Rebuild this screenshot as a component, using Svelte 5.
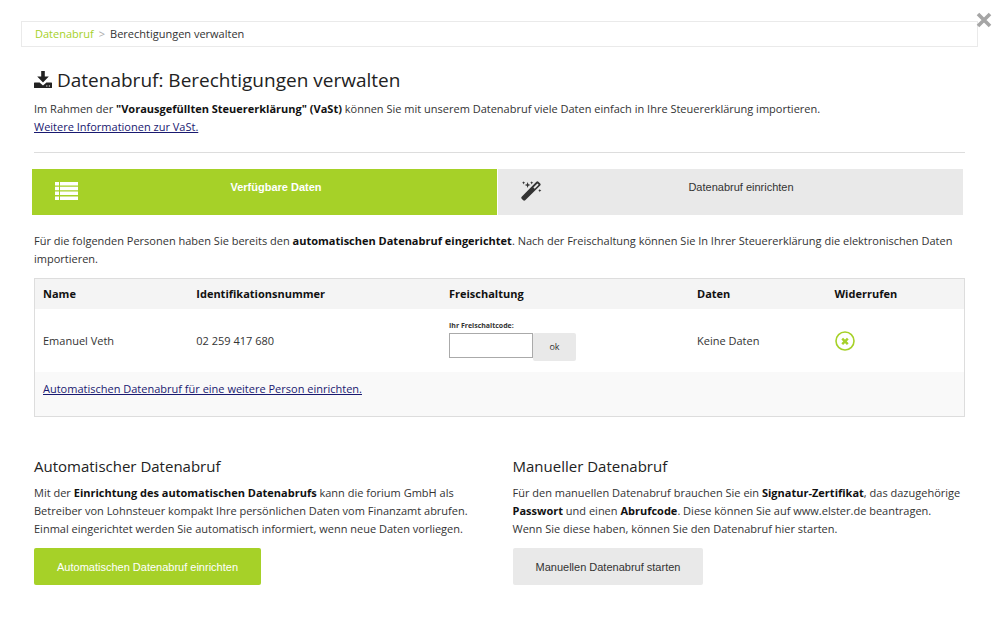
<script lang="ts">
  interface Person {
    name: string
    idNumber: string
    data: string
  }

  let persons: Person[] = $state([
    { name: "Emanuel Veth", idNumber: "02 259 417 680", data: "Keine Daten" },
  ])
</script>

<div class="page">
  <header>
    <nav>
      <a href="/datenabruf">Datenabruf</a>
      <span class="separator">&gt;</span>
      <span>Berechtigungen verwalten</span>
    </nav>
    <button class="close" aria-label="Schließen">
      <svg viewBox="0 0 16 16" width="16" height="16">
        <path d="M2 2 14 14M14 2 2 14" />
      </svg>
    </button>
  </header>

  <main>
    <h1>
      <svg viewBox="0 0 18 17" width="18" height="17">
        <path d="M7.2 0h3.6v5.5h4L9 11.6 3.2 5.5h4z" />
        <path d="M.6 11.4h5L9 14.6l3.4-3.2h5q.6 0 .6.6v4.4q0 .6-.6.6H.6q-.6 0-.6-.6V12q0-.6.6-.6zM12.2 14.4v1.2h1.2v-1.2zm2.6 0v1.2H16v-1.2z" fill-rule="evenodd" />
      </svg>
      Datenabruf: Berechtigungen verwalten
    </h1>
    <p>
      Im Rahmen der <b>"Vorausgefüllten Steuererklärung" (VaSt)</b> können Sie mit unserem Datenabruf viele Daten einfach in Ihre Steuererklärung importieren.<br />
      <a href="/vast">Weitere Informationen zur VaSt.</a>
    </p>
    <hr />

    <div class="tabs">
      <button class="active">
        <svg viewBox="0 0 23 18" width="23" height="18">
          <path d="M0 0h4v3.5H0zM5 0h18v3.5H5zM0 4.8h4v3.5H0zM5 4.8h18v3.5H5zM0 9.6h4v3.5H0zM5 9.6h18v3.5H5zM0 14.4h4V18H0zM5 14.4h18V18H5z" />
        </svg>
        <span>Verfügbare Daten</span>
      </button>
      <button>
        <svg viewBox="0 0 21 20" width="21" height="20">
          <path d="M15.4.8q1-.9 2 0l1.8 1.8q.9 1 0 2L4.2 19.3q-1 .9-2 0L.7 17.8q-.9-1 0-2zM16.4 2.4 12.4 6.4l1.3 1.3 4-4z" fill-rule="evenodd" />
          <path d="m6.6 1 .8 2.2 2.2.7-2.2.8-.8 2.2-.8-2.2-2.2-.8 2.2-.7zM2.6.2l.5 1.1 1.1.5-1.1.5-.5 1.1-.5-1.1L1 1.8l1.1-.5zM10.7.2l.5 1.1 1.1.5-1.1.5-.5 1.1-.5-1.1-1.1-.5 1.1-.5zM18.8 8l.5 1.1 1.1.5-1.1.5-.5 1.1-.5-1.1-1.1-.5 1.1-.5z" />
        </svg>
        <span>Datenabruf einrichten</span>
      </button>
    </div>

    <p>
      Für die folgenden Personen haben Sie bereits den <b>automatischen Datenabruf eingerichtet</b>. Nach der Freischaltung können Sie In Ihrer Steuererklärung die elektronischen Daten importieren.
    </p>

    <table>
      <thead>
        <tr>
          <th class="name">Name</th>
          <th class="number">Identifikationsnummer</th>
          <th class="unlock">Freischaltung</th>
          <th class="data">Daten</th>
          <th>Widerrufen</th>
        </tr>
      </thead>
      <tbody>
        {#each persons as person, i}
          <tr>
            <td>{person.name}</td>
            <td>{person.idNumber}</td>
            <td>
              <label for="code-{i}">Ihr Freischaltcode:</label>
              <div class="code">
                <input id="code-{i}" type="text" />
                <button>ok</button>
              </div>
            </td>
            <td>{person.data}</td>
            <td>
              <button class="revoke" aria-label="Widerrufen">
                <svg viewBox="0 0 20 20" width="20" height="20">
                  <circle cx="10" cy="10" r="9" />
                  <path d="m7.2 7.6 5.6 5.6M12.8 7.6l-5.6 5.6" />
                </svg>
              </button>
            </td>
          </tr>
        {/each}
      </tbody>
      <tfoot>
        <tr>
          <td colspan="5">
            <a href="/einrichten">Automatischen Datenabruf für eine weitere Person einrichten.</a>
          </td>
        </tr>
      </tfoot>
    </table>

    <div class="columns">
      <section>
        <h2>Automatischer Datenabruf</h2>
        <p>
          Mit der <b>Einrichtung des automatischen Datenabrufs</b> kann die forium GmbH als Betreiber von Lohnsteuer kompakt Ihre persönlichen Daten vom Finanzamt abrufen. Einmal eingerichtet werden Sie automatisch informiert, wenn neue Daten vorliegen.
        </p>
        <button class="action primary">Automatischen Datenabruf einrichten</button>
      </section>
      <section>
        <h2>Manueller Datenabruf</h2>
        <p>
          Für den manuellen Datenabruf brauchen Sie ein <b>Signatur-Zertifikat</b>, das dazugehörige <b>Passwort</b> und einen <b>Abrufcode</b>. Diese können Sie auf www.elster.de beantragen.<br />
          Wenn Sie diese haben, können Sie den Datenabruf hier starten.
        </p>
        <button class="action">Manuellen Datenabruf starten</button>
      </section>
    </div>
  </main>
</div>

<style>
  :global(body) {
    background: #fff;
  }
  .page {
    --green: #a6d128;
    --grey: #e9e9e9;

    padding: 21px 22px 21px 21px;
    font: 11px/18px "Open Sans", sans-serif;
    color: #333;
  }
  button {
    border: 0;
    padding: 0;
    background: none;
    color: inherit;
    font: 11px/18px "Liberation Sans", Arial, sans-serif;
    cursor: pointer;
  }
  svg {
    display: block;
    flex: none;
    fill: currentColor;
  }
  b,
  th {
    color: #111;
    font-weight: bold;
  }
  p {
    margin: 0;
  }
  header {
    position: relative;
  }
  nav {
    display: flex;
    gap: 5px;
    padding: 3px 13px;
    border: 1px solid #eaeaea;

    & a {
      color: var(--green);
      text-decoration: none;
    }
    & .separator {
      color: #aaa;
    }
  }
  .close {
    position: absolute;
    top: -9px;
    right: -14px;

    & svg {
      fill: none;
      stroke: #a5a5a5;
      stroke-width: 3.6;
    }
  }
  main {
    padding: 0 13px;

    & a {
      color: #191970;
    }
  }
  h1,
  h2 {
    margin: 0;
    color: #222;
    font-weight: normal;
  }
  h1 {
    display: flex;
    align-items: center;
    gap: 5px;
    margin: 19px 0 6px;
    font-size: 19px;
    line-height: 28px;

    & svg {
      margin-bottom: 2px;
    }
  }
  h2 {
    margin-bottom: 7px;
    font-size: 15px;
    line-height: 22px;
  }
  hr {
    height: 1px;
    margin: 16px 0;
    border: 0;
    background: #ddd;
  }
  .tabs {
    display: grid;
    grid-template-columns: 1fr 1fr;
    gap: 1px;
    margin: 0 2px 17px -2px;

    & button {
      display: flex;
      align-items: center;
      height: 46px;
      padding: 0 23px;
      background: var(--grey);
    }
    & svg {
      margin-bottom: 2px;
    }
    & span {
      flex: 1;
      padding-bottom: 10px;
    }
    & .active {
      background: var(--green);
      color: #fff;
      font-weight: bold;
    }
  }
  table {
    width: 100%;
    margin: 10px 0 38px;
    border: 1px solid #ddd;
    border-spacing: 0;
    table-layout: fixed;
  }
  th,
  td {
    padding: 0 8px;
    text-align: left;
  }
  th {
    height: 30px;
    background: #f4f4f4;
  }
  .name {
    width: 16.5%;
    box-sizing: border-box;
  }
  .number {
    width: 27.2%;
    box-sizing: border-box;
  }
  .unlock {
    width: 26.7%;
    box-sizing: border-box;
  }
  .data {
    width: 14.8%;
    box-sizing: border-box;
  }
  tbody td {
    height: 63px;
  }
  tfoot td {
    height: 34px;
    padding-bottom: 10px;
    background: #f9f9f9;
  }
  label {
    display: block;
    font-size: 7px;
    line-height: 12px;
    font-weight: bold;
  }
  .code {
    display: flex;
    align-items: flex-start;
    padding-top: 1px;

    & input {
      box-sizing: border-box;
      width: 84px;
      height: 25px;
      border: 1px solid #aaa;
      font: inherit;
    }
    & button {
      width: 43px;
      height: 28px;
      border-radius: 2px;
      background: var(--grey);
      font: 9px/18px "Open Sans", sans-serif;
    }
  }
  .revoke {
    display: block;
    margin-left: 1px;

    & svg {
      fill: none;
      stroke: var(--green);
      stroke-width: 1.6;
    }
    & path {
      stroke-width: 2.4;
    }
  }
  .columns {
    display: grid;
    grid-template-columns: 1fr 1fr;
    gap: 26px;
  }
  .action {
    height: 37px;
    margin-top: 10px;
    padding: 0 23px;
    border-radius: 2px;
    background: var(--grey);

    &.primary {
      background: var(--green);
      color: #fff;
    }
  }
</style>
